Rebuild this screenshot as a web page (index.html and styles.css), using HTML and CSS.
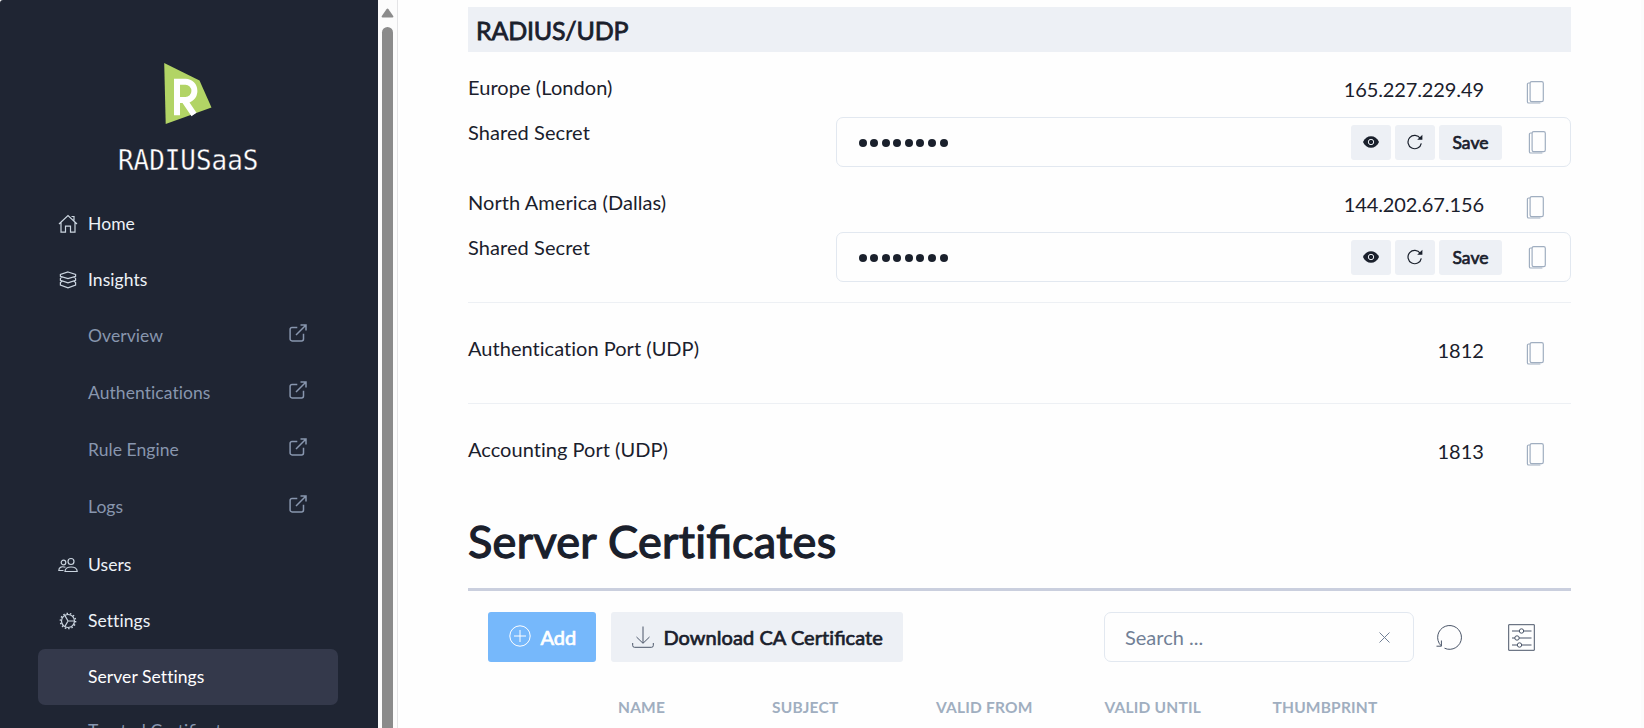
FILE: index.html
```html
<!DOCTYPE html>
<html lang="en">
<head>
<meta charset="utf-8">
<title>RADIUSaaS</title>
<link rel="stylesheet" href="styles.css">
</head>
<body>
<svg class="defs" width="0" height="0">
  <symbol id="ext" viewBox="0 0 18 18"><path d="M8.3 3.5H3A1.9 1.9 0 0 0 1.1 5.4V15A1.9 1.9 0 0 0 3 16.900H12.600A1.900 1.900 0 0 0 14.500 15V9.700M7 11L17 1M11.500 1H17V6.500"/></symbol>
  <symbol id="copy" viewBox="0 0 18 23"><rect x="4.100" y="0.600" width="13.200" height="20" rx="1.600"/><path d="M4.100 2H2.700A1.300 1.300 0 0 0 1.400 3.300V20.700A1.300 1.300 0 0 0 2.700 22H14.400"/></symbol>
  <symbol id="eye" viewBox="0 0 16 12"><path d="M0 6C3-1.700 13-1.700 16 6C13 13.700 3 13.700 0 6Z"/><circle cx="8" cy="6" r="2.700" class="iris"/></symbol>
  <symbol id="redo" viewBox="0 0 16 16"><path d="M13.300 4.300A6.700 6.700 0 1 0 14.300 9.300" fill="none" stroke="#1a202c" stroke-width="1.200"/><path d="M15.400 .8V5.800H10.200Z"/></symbol>
</svg>
<div class="app">
  <nav class="sidebar">
    <div class="brand">
      <svg class="logo" width="140" height="116" viewBox="0 0 140 116">
        <path d="M46.200 8L81.500 25.500L93.500 52.500L47.700 69Z" fill="#b2d465"/>
        <path d="M59 60.300V26.700H67.500A8.900 9.200 0 0 1 67.500 45.100H59M66.500 45.500L76 59.500" fill="none" stroke="#fff" stroke-width="6"/>
        <text x="0" y="115" class="wordmark" textLength="156" lengthAdjust="spacing" transform="scale(.9 1)">RADIUSaaS</text>
      </svg>
    </div>
    <a class="item"><svg class="ic" viewBox="0 0 20 20"><path d="M1 10L10 1.500L19 10M3 8.500V18.200H7.500V12.200H12.500V18.200H17V8.500M13.500 2.500H16V6.500"/></svg>Home</a>
    <a class="item"><svg class="ic" viewBox="0 0 20 20"><path d="M10 2L17.600 4.400V6.200L10 8.600L2.400 6.200V4.400ZM4 7L2.400 8.400V10.300L10 12.900L17.600 10.300V8.400L16 7M4 11.200L2.400 12.600V15L10 17.800L17.600 15V12.600L16 11.200"/></svg>Insights</a>
    <a class="item sub">Overview<svg class="ext"><use href="#ext"/></svg></a>
    <a class="item sub">Authentications<svg class="ext"><use href="#ext"/></svg></a>
    <a class="item sub">Rule Engine<svg class="ext"><use href="#ext"/></svg></a>
    <a class="item sub">Logs<svg class="ext"><use href="#ext"/></svg></a>
    <a class="item"><svg class="ic" viewBox="0 0 20 20"><circle cx="13" cy="6.500" r="3"/><circle cx="5.500" cy="7.500" r="2.300"/><path d="M7 16.500C7 10.500 19.200 10.500 19.200 16.500ZM5.500 15.500H.8C.8 12 4 11 7.500 12.300"/></svg>Users</a>
    <a class="item"><svg class="ic" viewBox="0 0 20 20"><circle cx="10" cy="10" r="6.500"/><circle cx="10" cy="10" r="7.600" class="teeth"/><path d="M10 10H16.500M10 10L6.800 4.400M10 10L6.800 15.600"/></svg>Settings</a>
    <a class="item sub active">Server Settings</a>
    <a class="item sub last"><span>Trusted Certi<span class="lig">fi</span>cates</span></a>
  </nav>
  <div class="scroll">
    <svg width="13" height="10" viewBox="0 0 13 10"><path d="M1.500 9.500Q0 9.300 .8 8L5.500 1.200Q6.500 0 7.500 1.200L12.200 8Q13 9.300 11.500 9.500Z" fill="#8b8b8b"/></svg>
    <div class="thumb"></div>
  </div>
  <main class="main">
    <h2 class="band">RADIUS/UDP</h2>
    <section class="region">
      <div class="row"><span>Europe (London)</span><span class="val ip">165.227.229.49</span><svg class="copy"><use href="#copy"/></svg></div>
      <div class="secret"><span>Shared Secret</span>
        <div class="field"><span class="dots"><i></i><i></i><i></i><i></i><i></i><i></i><i></i><i></i></span>
          <span class="btn sq"><svg width="16" height="12"><use href="#eye"/></svg></span><span class="btn sq"><svg width="16" height="16"><use href="#redo"/></svg></span><span class="btn save">Save</span><svg class="copy"><use href="#copy"/></svg></div>
      </div>
    </section>
    <section class="region">
      <div class="row"><span>North America (Dallas)</span><span class="val ip">144.202.67.156</span><svg class="copy"><use href="#copy"/></svg></div>
      <div class="secret"><span>Shared Secret</span>
        <div class="field"><span class="dots"><i></i><i></i><i></i><i></i><i></i><i></i><i></i><i></i></span>
          <span class="btn sq"><svg width="16" height="12"><use href="#eye"/></svg></span><span class="btn sq"><svg width="16" height="16"><use href="#redo"/></svg></span><span class="btn save">Save</span><svg class="copy"><use href="#copy"/></svg></div>
      </div>
    </section>
    <div class="port"><div class="row"><span>Authentication Port (UDP)</span><span class="val">1812</span><svg class="copy"><use href="#copy"/></svg></div></div>
    <div class="port"><div class="row"><span>Accounting Port (UDP)</span><span class="val">1813</span><svg class="copy"><use href="#copy"/></svg></div></div>
    <h1 class="title">Server Certi<span class="lig">fi</span>cates</h1>
    <div class="tools">
      <span class="tbtn add"><svg width="22" height="22" viewBox="0 0 22 22"><circle cx="11" cy="11" r="10.200"/><path d="M11 5V17M5 11H17"/></svg>Add</span>
      <span class="tbtn dl"><svg width="22" height="22" viewBox="0 0 22 22"><path d="M11 .5V17M4.500 11L11 17.300L17.500 11M.7 17V19.500Q.7 21.300 2.500 21.300H19.500Q21.300 21.300 21.300 19.500V17"/></svg><span>Download CA Certi<span class="lig">fi</span>cate</span></span>
      <span class="search">Search ...<svg width="11" height="11" viewBox="0 0 11 11"><path d="M.5 .5L10.500 10.500M10.500 .5L.5 10.500"/></svg></span>
      <svg class="reload" width="26" height="26" viewBox="0 0 26 26"><path d="M5 21.700A11.900 11.900 0 1 1 8.500 24.200M.5 22.200H5.400V16.500"/></svg>
      <svg class="filter" width="27" height="27" viewBox="0 0 27 27"><path d="M.7 .7H26.300V26.300H.7ZM4 7H11.500M15.500 7H23.500M4 14H7M11 14H23.500M4 21H9.500M13.500 21H23.500"/><circle cx="13.500" cy="7" r="2.200"/><circle cx="9" cy="14" r="2.200"/><circle cx="11.500" cy="21" r="2.200"/></svg>
    </div>
    <div class="thead"><span>NAME</span><span>SUBJECT</span><span>VALID FROM</span><span>VALID UNTIL</span><span>THUMBPRINT</span></div>
  </main>
</div>
</body>
</html>
```
FILE: styles.css
```css
* { box-sizing: border-box; }
html, body { height: 100%; }
body { margin: 0; overflow: hidden; background: #fefefe; color: #1a202c; font: 20px/30px Lato, sans-serif; letter-spacing: .07px; font-variant-ligatures: no-common-ligatures; }
.lig { letter-spacing: 0; font-variant-ligatures: common-ligatures; }
.defs { display: block; height: 0; }
.app { display: flex; height: 728px; overflow: hidden; border-right: 3px solid #fbfbfb; }
.sidebar { flex: none; width: 378px; height: 728px; overflow: hidden; background: #1f2533; border-top-left-radius: 3px; padding: 0 40px 0 38px; font-size: 17.5px; }
.brand { height: 195.5px; padding: 55px 0 0 80px; }
.logo { display: block; overflow: visible; }
.wordmark { font: 28.800px "DejaVu Sans Mono", monospace; fill: #fff; stroke: #1f2533; stroke-width: .3px; }
.item { display: flex; align-items: center; height: 56.200px; padding-left: 20px; color: #edf2f7; }
.item.sub { height: 57.200px; padding: 0 31px 1.500px 50px; color: #8896ae; justify-content: space-between; }
.item.active { height: 56px; padding-bottom: 1px; background: #34394b; border-radius: 7px; color: #fff; }
.item.last { padding-bottom: 5px; }
.ic { width: 20px; height: 20px; margin-right: 10px; fill: none; stroke: #cbd5e0; stroke-width: 1.200; }
.teeth { stroke-width: 1.500; stroke-dasharray: 1.500 1.910; }
.ext { width: 18px; height: 18px; margin-top: -6px; fill: none; stroke: #8896ae; stroke-width: 1.500; }
.scroll { flex: none; width: 20px; padding: 8px 0 0 3px; background: #fcfcfc; border-right: 1px solid #e4e4e6; }
.scroll svg { display: block; }
.thumb { width: 11px; height: 720px; margin: 9px 0 0 1px; border-radius: 6px; background: #8b8b8b; }
.main { flex: none; width: 1173px; padding: 7px 0 0 70px; }
h1, h2 { margin: 0; font-weight: 400; -webkit-text-stroke: .8px #1a202c; }
.band { height: 45px; margin-bottom: 20px; padding-left: 8px; background: #edf0f5; font-size: 25px; line-height: 47px; letter-spacing: -.2px; }
.region { height: 115px; }
.row { display: flex; align-items: flex-start; height: 45px; }
.row .val { margin-left: auto; padding-top: 2px; }
.row .ip { letter-spacing: -.1px; }
.row .copy { margin: 9px 27px 0 42px; }
.copy { flex: none; width: 18px; height: 23px; fill: none; stroke: #a0aec0; stroke-width: 1.200; }
.secret { display: flex; justify-content: space-between; height: 50px; }
.field { display: flex; align-items: center; width: 735px; height: 50px; padding: 0 24px 0 21.500px; border: 1px solid #e2e8f0; border-radius: 7px; }
.dots { display: flex; gap: 3.600px; margin: 2px auto 0 0; }
.dots i { width: 8px; height: 8px; border-radius: 50%; background: #1a202c; }
.btn { display: flex; align-items: center; justify-content: center; height: 35px; margin: 1px 4px 0 0; padding-bottom: 2px; background: #edf0f5; border-radius: 3px; fill: #1a202c; }
.sq { width: 40px; }
.iris { fill: none; stroke: #edf0f5; stroke-width: 1; }
.save { width: 63px; padding: 1px 0 0; margin-right: 26px; font-size: 17.5px; -webkit-text-stroke: .7px #1a202c; }
.port { height: 101px; border-top: 1px solid #edf0f4; padding-top: 30px; letter-spacing: .03px; }
.title { height: 84px; margin-top: 3px; padding-top: 4px; border-bottom: 3px solid #cacfde; font-size: 45px; line-height: 60px; letter-spacing: .32px; -webkit-text-stroke-width: 1.300px; }
.tools { display: flex; align-items: center; height: 50px; margin-top: 21px; padding-left: 20px; }
.tools svg { flex: none; fill: none; stroke: #4a5568; }
.tbtn { display: flex; align-items: center; height: 50px; padding-left: 21px; background: #edf0f5; border-radius: 3px; letter-spacing: .05px; -webkit-text-stroke: .7px; }
.tbtn svg { margin-right: 9.500px; }
.tools .add { width: 108px; margin-right: 15px; background: #76b8fb; color: #fff; }
.tools .add svg { stroke: #fff; margin-bottom: 3px; }
.dl { width: 292px; }
.search { display: flex; align-items: center; justify-content: space-between; width: 310px; height: 50px; margin-left: auto; padding: 0 23px 0 20px; border: 1px solid #e2e8f0; border-radius: 7px; color: #718096; letter-spacing: 0; }
.tools .search svg { stroke: #718096; }
.reload { margin: 0 46px 0 22px; }
.filter { margin-right: 36px; }
.thead { display: grid; grid-template-columns: 154px 164px 168.500px 168px 1fr; margin-top: 30px; padding-left: 150px; color: #a0aec0; font-size: 15.5px; font-weight: 700; letter-spacing: .2px; }
```
